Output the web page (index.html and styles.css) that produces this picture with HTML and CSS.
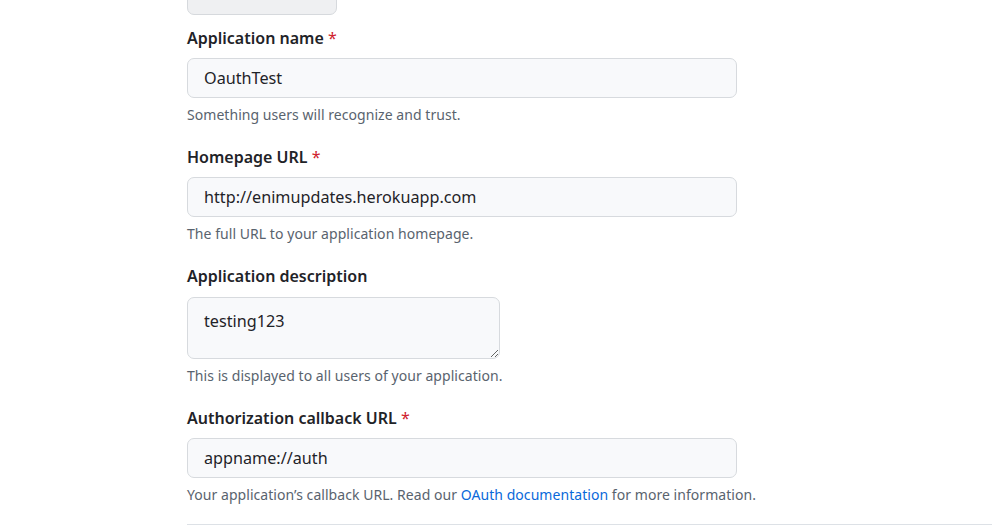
FILE: index.html
```html
<!DOCTYPE html>
<html lang="en">
<head>
<meta charset="utf-8">
<title>Register a new OAuth application</title>
<link rel="stylesheet" href="styles.css">
</head>
<body>
<div class="page">
  <form class="form">
    <div class="upload-btn"></div>
    <div class="group">
      <label class="label" for="name">Application name <span class="req">*</span></label>
      <input class="field" id="name" type="text" value="OauthTest">
      <p class="note">Something users will recognize and trust.</p>
    </div>
    <div class="group">
      <label class="label" for="home">Homepage URL <span class="req">*</span></label>
      <input class="field" id="home" type="text" value="http://enimupdates.herokuapp.com">
      <p class="note">The full URL to your application homepage.</p>
    </div>
    <div class="group">
      <label class="label" for="desc">Application description</label>
      <textarea class="field area" id="desc">testing123</textarea>
      <p class="note">This is displayed to all users of your application.</p>
    </div>
    <div class="group">
      <label class="label" for="cb">Authorization callback URL <span class="req">*</span></label>
      <input class="field" id="cb" type="text" value="appname://auth">
      <p class="note">Your application’s callback URL. Read our <a class="link" href="#">OAuth documentation</a> for more information.</p>
    </div>
    <hr class="divider">
  </form>
</div>
</body>
</html>
```

FILE: styles.css
```css
html, body {
  margin: 0;
  padding: 0;
  background: #ffffff;
  overflow: hidden;
}
body {
  font-family: "Noto Sans", "Open Sans", Arial, sans-serif;
  color: #1f2328;
}
.page {
  padding-left: 187px;
}
.form {
  width: 805px;
  display: flex;
  flex-direction: column;
}
.upload-btn {
  width: 148px;
  height: 33px;
  margin-top: -20px;
  background: #eff0f2;
  border: 1px solid #d6d9dd;
  border-radius: 7px;
  margin-bottom: 11px;
}
.group {
  width: 550px;
  display: flex;
  flex-direction: column;
  margin-bottom: 20px;
}
.label {
  font-size: 16px;
  font-weight: 600;
  line-height: 24px;
  margin-bottom: 8px;
  color: #1f2328;
}
.req {
  color: #cf222e;
  font-weight: 400;
}
.field {
  box-sizing: border-box;
  width: 550px;
  height: 40px;
  padding: 0 16px;
  font-family: inherit;
  font-size: 16.2px;
  color: #1f2328;
  background: #f8f9fb;
  border: 1px solid #d7dade;
  border-radius: 7px;
  outline: none;
}
.area {
  width: 313px;
  height: 62px;
  margin-top: 1px;
  padding-top: 11px;
  line-height: 24px;
  resize: vertical;
}
.note {
  margin: 7px 0 0;
  font-size: 14px;
  line-height: 20px;
  color: #59636e;
  white-space: nowrap;
  letter-spacing: 0.05px;
}
.link {
  color: #0969da;
  text-decoration: none;
}
.divider {
  margin: -1px 0 0;
  border: 0;
  border-top: 1px solid #dde1e6;
  width: 805px;
}
```
